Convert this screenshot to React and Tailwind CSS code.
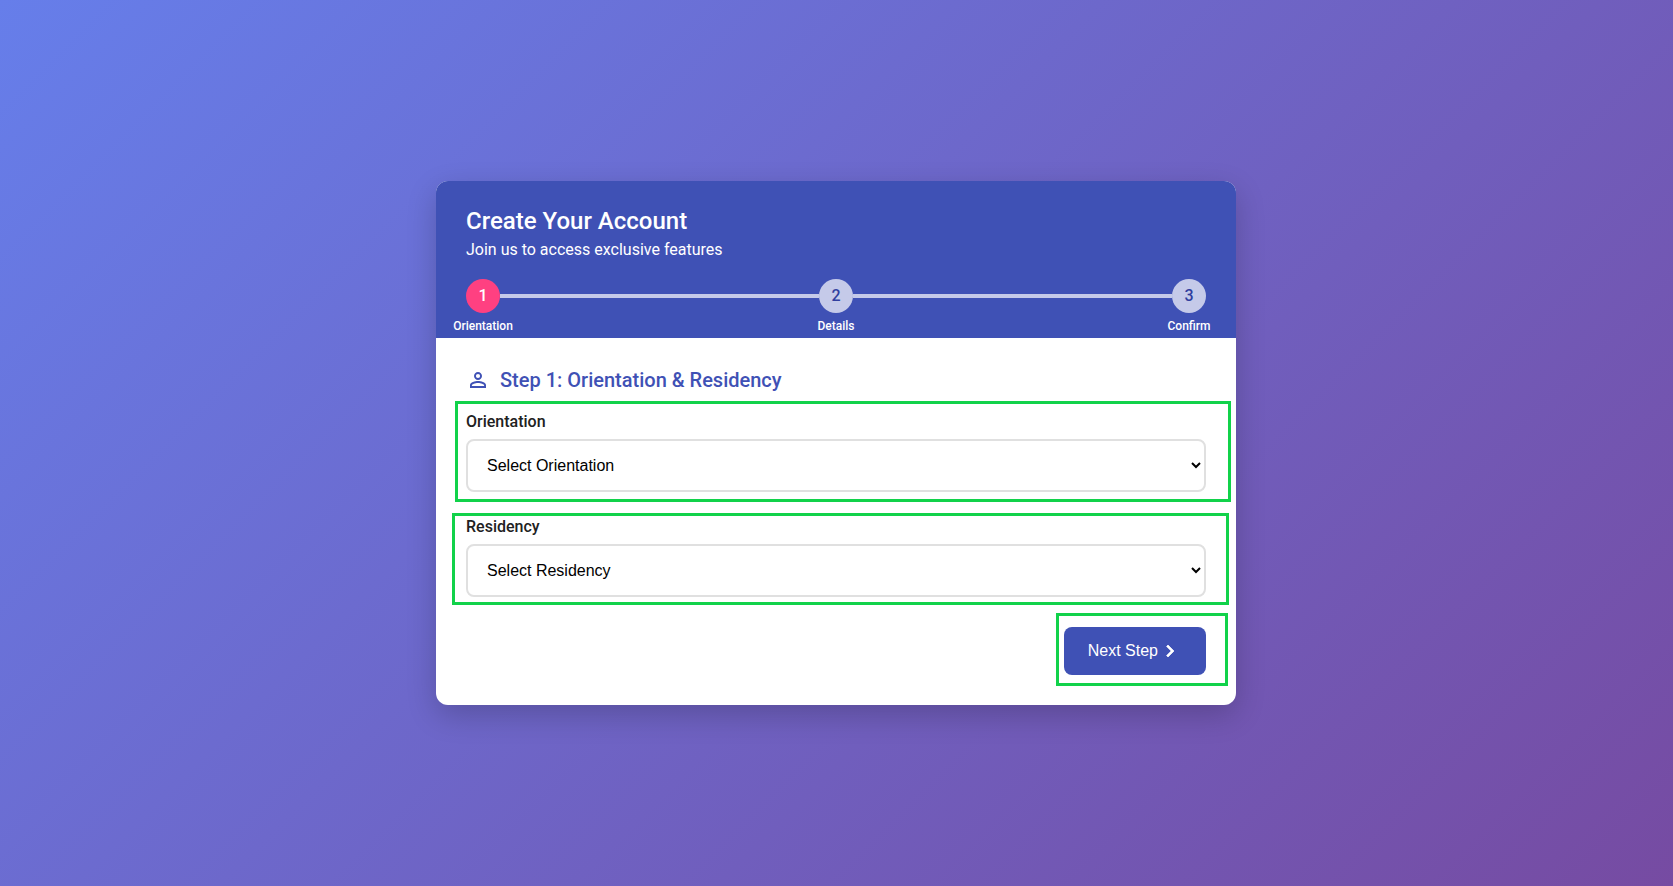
import { useState } from 'react';
import { MdPersonOutline } from 'react-icons/md';

const STEPS = ['Orientation', 'Details', 'Confirm'];

const Highlight = ({ className }) => (
  <div className={`absolute border-3 border-[#11d24a] pointer-events-none ${className}`} />
);

const ChevronRight = () => (
  <svg width="24" height="24" viewBox="0 0 24 24" fill="currentColor" stroke="currentColor" strokeWidth="0.7" aria-hidden="true">
    <path d="M10 6 8.59 7.41 13.17 12l-4.58 4.59L10 18l6-6z" />
  </svg>
);

const Stepper = ({ current }) => (
  <ol className="flex items-start mt-4">
    {STEPS.map((label, i) => (
      <li key={label} className={i > 0 ? 'flex items-start flex-1' : 'flex items-start'}>
        {i > 0 && <div className="flex-1 h-1 mt-[15px] bg-[#c5cae9]" />}
        <div className="w-[34px] flex flex-col items-center">
          <span
            className={`w-[34px] h-[34px] rounded-full flex items-center justify-center font-medium ${
              i + 1 === current ? 'bg-[#ff4081] text-white' : 'bg-[#c5cae9] text-[#303f9f]'
            }`}
          >
            {i + 1}
          </span>
          <span className="mt-[5px] text-xs font-medium whitespace-nowrap">{label}</span>
        </div>
      </li>
    ))}
  </ol>
);

const SelectField = ({ id, label, placeholder, options, highlight }) => {
  const [value, setValue] = useState('');

  return (
    <div className="relative">
      <label htmlFor={id} className="block mb-[5px] font-medium text-[#212121]">
        {label}
      </label>
      <select
        id={id}
        value={value}
        onChange={(e) => setValue(e.target.value)}
        className="block w-full h-[53px] px-[15px] border-2 border-[#e0e0e0] rounded-lg bg-white text-base text-black font-['Liberation_Sans',Arial,sans-serif]"
      >
        <option value="">{placeholder}</option>
        {options.map((o) => (
          <option key={o} value={o}>
            {o}
          </option>
        ))}
      </select>
      <Highlight className={highlight} />
    </div>
  );
};

const App = () => {
  return (
    <div className="min-h-screen flex items-center justify-center py-5 pl-5 pr-[21px] bg-[linear-gradient(135deg,#667eea_0%,#764ba2_100%)] font-[Roboto,sans-serif]">
      <main className="w-full max-w-[800px] rounded-xl overflow-hidden bg-white shadow-[0_10px_30px_rgba(0,0,0,0.2)]">
        <header className="px-[30px] pt-6 pb-1 bg-[#3f51b5] text-white">
          <h1 className="text-2xl font-medium">Create Your Account</h1>
          <p className="text-base leading-[26px]">Join us to access exclusive features</p>
          <Stepper current={1} />
        </header>

        <form className="p-[30px]" onSubmit={(e) => e.preventDefault()}>
          <h2 className="flex items-center gap-2.5 mb-[18px] text-xl leading-6 font-medium text-[#3f51b5]">
            <MdPersonOutline size={24} />
            Step 1: Orientation &amp; Residency
          </h2>

          <div className="space-y-[23px]">
            <SelectField
              id="orientation"
              label="Orientation"
              placeholder="Select Orientation"
              options={['Local', 'International']}
              highlight="-top-[9px] -bottom-2.5 -left-[11px] -right-[25px]"
            />
            <SelectField
              id="residency"
              label="Residency"
              placeholder="Select Residency"
              options={['Resident', 'Non-resident']}
              highlight="-top-0.5 -bottom-2 -left-3.5 -right-[23px]"
            />
          </div>

          <div className="flex justify-end mt-[30px]">
            <div className="relative">
              <button
                type="submit"
                className="h-12 px-6 flex items-center rounded-lg bg-[#3f51b5] text-white text-base font-['Liberation_Sans',Arial,sans-serif]"
              >
                Next Step
                <ChevronRight />
              </button>
              <Highlight className="-top-3.5 -bottom-[11px] -left-2 -right-[22px]" />
            </div>
          </div>
        </form>
      </main>
    </div>
  );
};

export default App;
